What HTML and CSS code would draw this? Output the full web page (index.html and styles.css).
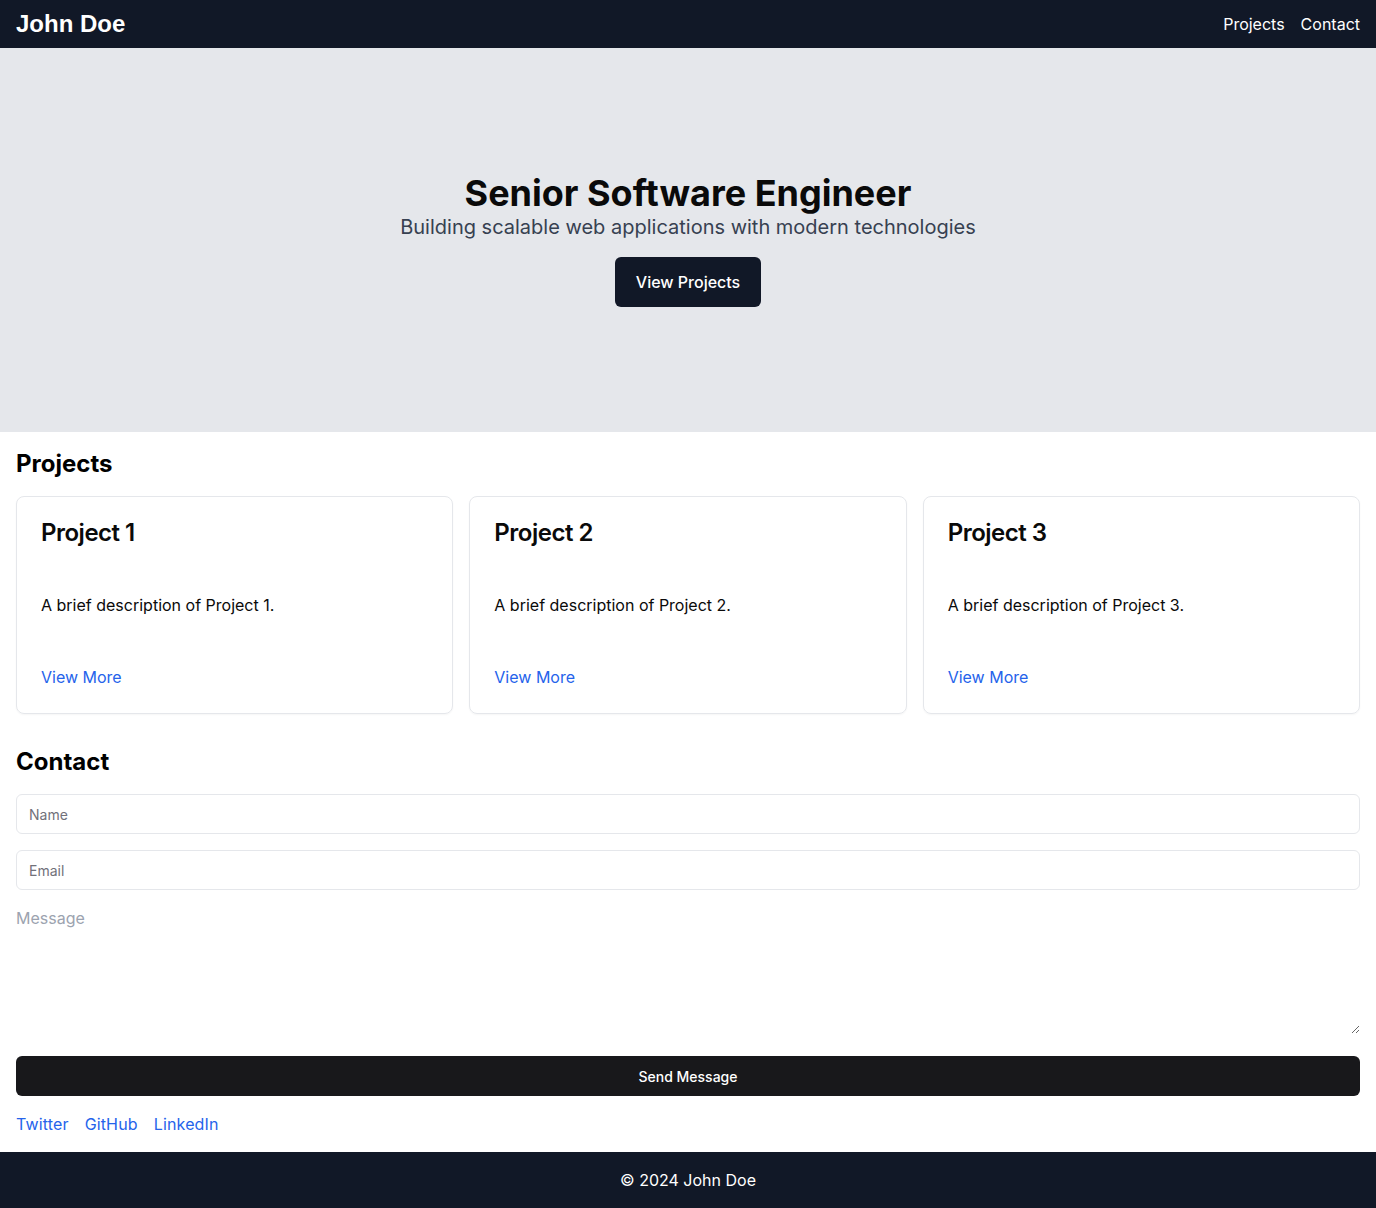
FILE: index.html
```html
<!DOCTYPE html>
<html lang="en">
<head>
<meta charset="utf-8">
<title>John Doe</title>
<link rel="stylesheet" href="styles.css">
</head>
<body>
<header class="topbar">
  <div class="brand">John Doe</div>
  <nav class="nav">
    <a href="#projects">Projects</a>
    <a href="#contact">Contact</a>
  </nav>
</header>
<section class="hero">
  <h1 class="hero-title">Senior Software Engineer</h1>
  <p class="hero-sub">Building scalable web applications with modern technologies</p>
  <button class="hero-btn">View Projects</button>
</section>
<section class="section" id="projects">
  <h2 class="section-title">Projects</h2>
  <div class="cards">
    <div class="card">
      <h3 class="card-title">Project 1</h3>
      <p class="card-desc">A brief description of Project 1.</p>
      <a class="card-link" href="#">View More</a>
    </div>
    <div class="card">
      <h3 class="card-title">Project 2</h3>
      <p class="card-desc">A brief description of Project 2.</p>
      <a class="card-link" href="#">View More</a>
    </div>
    <div class="card">
      <h3 class="card-title">Project 3</h3>
      <p class="card-desc">A brief description of Project 3.</p>
      <a class="card-link" href="#">View More</a>
    </div>
  </div>
</section>
<section class="section" id="contact">
  <h2 class="section-title">Contact</h2>
  <form class="form">
    <input class="field" type="text" placeholder="Name">
    <input class="field" type="email" placeholder="Email">
    <textarea class="message" placeholder="Message"></textarea>
    <button class="send" type="button">Send Message</button>
  </form>
  <div class="socials">
    <a href="#">Twitter</a>
    <a href="#">GitHub</a>
    <a href="#">LinkedIn</a>
  </div>
</section>
<footer class="footer">© 2024 John Doe</footer>
</body>
</html>
```
FILE: styles.css
```css
* { box-sizing: border-box; }
html, body { margin: 0; padding: 0; }
body {
  font-family: Inter, "Noto Sans", sans-serif;
  font-size: 16px;
  line-height: 24px;
  color: #0a0a0a;
  background: #fff;
}
a { text-decoration: none; }
.topbar {
  height: 48px;
  background: #111827;
  display: flex;
  align-items: center;
  justify-content: space-between;
  padding: 0 16px;
}
.brand {
  font-family: "Liberation Sans", Arial, sans-serif;
  font-weight: 700;
  font-size: 24px;
  color: #fff;
  line-height: 32px;
}
.nav { display: flex; gap: 16px; }
.nav a { color: #fff; font-size: 16px; }
.hero {
  height: 384px;
  background: #e5e7eb;
  display: flex;
  flex-direction: column;
  align-items: center;
  justify-content: center;
  text-align: center;
}
.hero-title {
  margin: 0;
  font-size: 36px;
  line-height: 40px;
  font-weight: 700;
  color: #0a0a0a;
}
.hero-sub {
  margin: 0;
  font-size: 20px;
  line-height: 28px;
  color: #374151;
}
.hero-btn {
  margin-top: 16px;
  font-family: inherit;
  font-size: 16px;
  line-height: 24px;
  font-weight: 500;
  color: #fff;
  background: #111827;
  border: 0;
  border-radius: 6px;
  padding: 13px 21px;
}
.section { padding: 16px; }
.section-title {
  margin: 0 0 16px;
  font-size: 24px;
  line-height: 32px;
  font-weight: 700;
  color: #000;
}
.cards {
  display: grid;
  grid-template-columns: repeat(3, 1fr);
  gap: 16px;
}
.card {
  border: 1px solid #e5e7eb;
  border-radius: 8px;
  padding: 24px;
  box-shadow: 0 1px 2px rgba(0,0,0,0.04);
  display: flex;
  flex-direction: column;
  align-items: flex-start;
}
.card-title {
  margin: 0;
  font-size: 24px;
  line-height: 24px;
  font-weight: 600;
  letter-spacing: -0.5px;
  color: #0a0a0a;
}
.card-desc {
  margin: 48px 0 0;
  font-size: 16px;
  line-height: 24px;
  color: #0a0a0a;
}
.card-link {
  margin-top: 48px;
  color: #2563eb;
  font-size: 16px;
}
.form {
  display: flex;
  flex-direction: column;
  gap: 16px;
}
.field {
  height: 40px;
  border: 1px solid #e5e7eb;
  border-radius: 6px;
  padding: 0 12px;
  font-family: inherit;
  font-size: 14px;
  color: #0a0a0a;
  background: #fff;
}
.field::placeholder { color: #71717a; }
.message {
  display: block;
  height: 128px;
  margin-bottom: 6px;
  border: 0;
  padding: 0;
  font-family: inherit;
  font-size: 16px;
  line-height: 24px;
  background: transparent;
  outline: none;
}
.message::placeholder { color: #9ca3af; }
.send {
  height: 40px;
  border: 0;
  border-radius: 6px;
  background: #18181b;
  color: #fff;
  font-family: inherit;
  font-size: 14px;
  font-weight: 500;
}
.socials {
  display: flex;
  gap: 16px;
  margin-top: 16px;
}
.socials a { color: #2563eb; font-size: 16px; letter-spacing: 0.15px; }
.footer {
  background: #111827;
  color: #fff;
  text-align: center;
  padding: 16px;
  font-family: Inter, "Noto Sans", sans-serif;
  font-size: 16px;
  line-height: 24px;
}
```
